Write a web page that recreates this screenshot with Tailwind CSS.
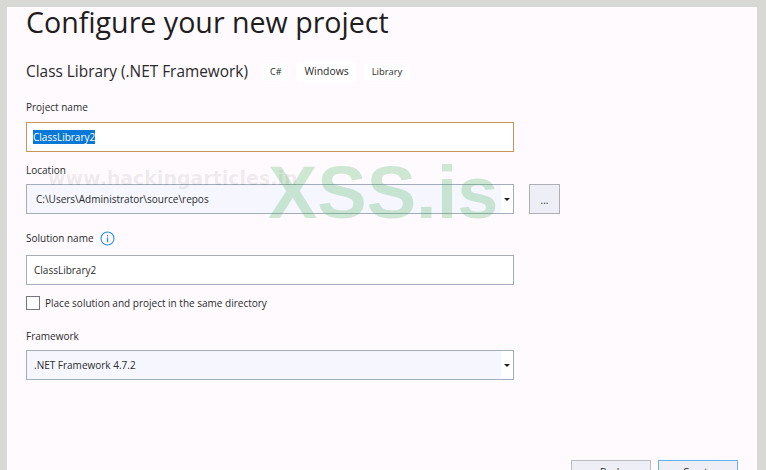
<!DOCTYPE html>
<html lang="en">
<head>
    <meta charset="UTF-8">
    <title>Configure your new project</title>
    <script src="https://cdn.jsdelivr.net/npm/@tailwindcss/browser@4"></script>
</head>
<body class="bg-[#d8d8d5]">
    <div class="relative w-[766px] h-[470px] overflow-hidden pt-[7px] pl-[7px] pr-[9px] font-['Open_Sans',sans-serif] text-[#2b2b2b]">
        <div class="h-[463px] bg-[#fefafe] pl-[19px] overflow-hidden">
            <!-- Title -->
            <h1 class="-mt-[2px] h-[34px] text-[28.6px] leading-[34px] text-[#1e1e1e] whitespace-nowrap">Configure your new project</h1>

            <!-- Template name and tags -->
            <div class="flex items-center mt-[23px] h-[20px]">
                <h2 class="text-[15.4px] whitespace-nowrap w-[236px]">Class Library (.NET Framework)</h2>
                <span class="px-[8px] py-[2px] bg-white text-[9px] rounded-sm">C#</span>
                <span class="ml-[7px] px-[8px] py-[2px] bg-white text-[10.4px] rounded-sm">Windows</span>
                <span class="ml-[7px] px-[8px] py-[2px] bg-white text-[9.4px] rounded-sm">Library</span>
            </div>

            <!-- Project name -->
            <div class="mt-[17px] h-[16px] text-[10px] leading-[16px]">Project name</div>
            <div class="mt-[7px] w-[488px] h-[30px] border border-[#c8965a] bg-white flex items-center pl-[6px] text-[10px]">
                <span class="bg-[#0a78d7] text-white leading-[14px]">ClassLibrary2</span>
            </div>

            <!-- Location -->
            <div class="mt-[10px] h-[16px] text-[10px] leading-[16px]">Location</div>
            <div class="mt-[6px] flex">
                <div class="w-[488px] h-[30px] border border-[#a3adbb] bg-white flex">
                    <div class="flex-1 bg-[#f5f6fe] flex items-center pl-[9px] text-[10px]">C:\Users\Administrator\source\repos</div>
                    <div class="w-[12px] flex items-center justify-center">
                        <div class="w-0 h-0 border-x-[3px] border-x-transparent border-t-[3px] border-t-[#1e1e1e]"></div>
                    </div>
                </div>
                <div class="ml-[15px] w-[31px] h-[30px] border border-[#b0b0b4] bg-[#eeeff6] flex items-center justify-center text-[10px] pt-[2px]">...</div>
            </div>

            <!-- Solution name -->
            <div class="mt-[15px] h-[18px] flex items-center gap-[6px] text-[10px]">
                <span>Solution name</span>
                <svg width="15" height="15" viewBox="0 0 15 15" fill="none">
                    <circle cx="7.5" cy="7.5" r="6.5" stroke="#2a8fe0" stroke-width="1.1"/>
                    <rect x="6.9" y="6.5" width="1.3" height="4.5" fill="#2a8fe0"/>
                    <rect x="6.9" y="4" width="1.3" height="1.4" fill="#2a8fe0"/>
                </svg>
            </div>
            <div class="mt-[8px] w-[488px] h-[30px] border border-[#a3adbb] bg-white flex items-center pl-[7px] text-[10px]">ClassLibrary2</div>

            <!-- Same directory checkbox -->
            <div class="mt-[10px] flex items-center h-[16px] text-[10px]">
                <div class="w-[14px] h-[14px] border border-[#77777b] bg-white"></div>
                <span class="ml-[5px]">Place solution and project in the same directory</span>
            </div>

            <!-- Framework -->
            <div class="mt-[17px] h-[16px] text-[10px] leading-[16px]">Framework</div>
            <div class="mt-[6px] w-[488px] h-[30px] border border-[#a3adbb] bg-white flex">
                <div class="flex-1 bg-[#f5f6fe] flex items-center pl-[7px] text-[10px]">.NET Framework 4.7.2</div>
                <div class="w-[12px] flex items-center justify-center">
                    <div class="w-0 h-0 border-x-[3px] border-x-transparent border-t-[3px] border-t-[#1e1e1e]"></div>
                </div>
            </div>

            <!-- Footer buttons, cut off by the bottom edge -->
            <div class="mt-[80px] flex justify-end gap-[7px] pr-[19px] text-[10px] text-[#1e1e1e]">
                <div class="w-[80px] h-[24px] border border-[#bcbcbf] bg-[#eeeff6] flex items-center justify-center">Back</div>
                <div class="w-[80px] h-[24px] border border-[#62b1ee] bg-[#eeeff6] flex items-center justify-center">Create</div>
            </div>
        </div>

        <!-- Watermarks -->
        <div class="absolute left-[48px] top-[165px] text-[19px] leading-[26px] font-bold text-black/[0.08] whitespace-nowrap font-['DejaVu_Sans',sans-serif]">www.hackingarticles.in</div>
        <div class="absolute left-[268px] top-[151px] text-[74px] leading-[84px] font-bold text-[#3fae52]/25 whitespace-nowrap font-['Liberation_Sans',sans-serif]">XSS.is</div>
    </div>
</body>
</html>
